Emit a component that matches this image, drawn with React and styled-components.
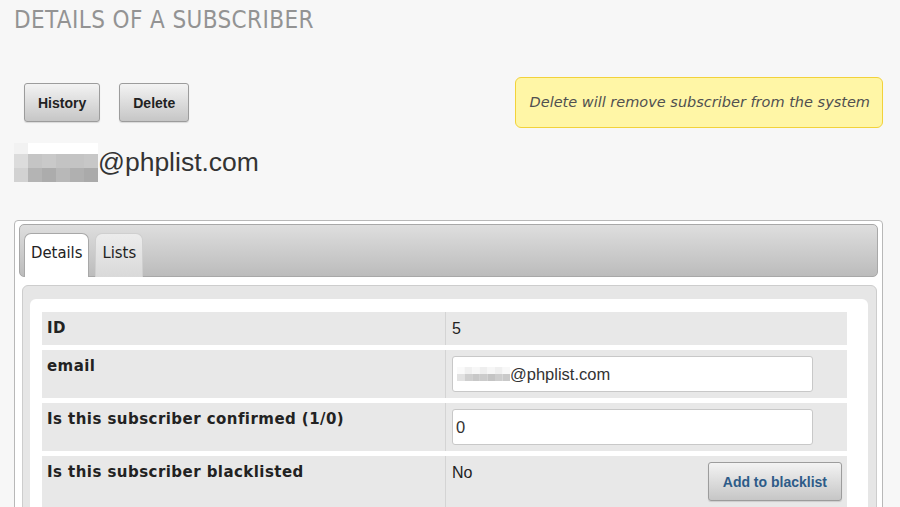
import React from 'react';
import styled, { createGlobalStyle } from 'styled-components';

const GlobalStyle = createGlobalStyle`
  html, body {
    margin: 0;
    padding: 0;
    background: #f7f7f7;
    overflow: hidden;
  }
  body {
    font-family: "Liberation Sans", Arial, sans-serif;
    color: #333;
  }
`;

const Page = styled.div`
  padding: 5px 17px 0 14px;
`;

const Title = styled.h1`
  margin: 0;
  font-family: "DejaVu Sans Condensed", "DejaVu Sans", sans-serif;
  font-size: 24px;
  line-height: 30px;
  font-weight: normal;
  letter-spacing: 0.4px;
  color: #939393;
`;

const ActionRow = styled.div`
  display: flex;
  justify-content: space-between;
  align-items: center;
  margin-top: 42px;
  padding-left: 10px;
`;

const ButtonGroup = styled.div`
  display: flex;
  gap: 19px;
`;

const GrayButton = styled.button`
  height: 39px;
  padding: 0 ${p => (p.$blue ? 14 : 13)}px;
  border: 1px solid #9c9c9c;
  border-radius: 3px;
  background: linear-gradient(#f3f3f3, #c6c6c6);
  box-shadow: 0 1px 1px rgba(0, 0, 0, 0.12);
  font-family: "Liberation Sans", Arial, sans-serif;
  font-weight: bold;
  font-size: 14px;
  color: ${p => (p.$blue ? '#2d5b88' : '#222')};
  cursor: pointer;
`;

const Note = styled.div`
  height: 49px;
  padding: 0 12px 0 14px;
  border: 1px solid #f2d23a;
  border-radius: 6px;
  background: #fff6a6;
  font-family: "DejaVu Sans", Verdana, sans-serif;
  font-style: italic;
  font-size: 14.5px;
  line-height: 49px;
  color: #505050;
`;

const EmailHeading = styled.div`
  display: flex;
  align-items: center;
  margin-top: 15px;
  font-size: 26.5px;
  line-height: 39px;
  color: #333;
`;

const Panel = styled.div`
  margin-top: 38px;
  padding: 3px 4px 0;
  border: 1px solid #b8b8b8;
  border-radius: 4px;
  background: #fff;
`;

const TabBar = styled.div`
  display: flex;
  align-items: flex-end;
  gap: 6px;
  height: 51px;
  padding: 0 4px;
  border: 1px solid #a8a8a8;
  border-radius: 5px;
  background: linear-gradient(#dedede, #bcbcbc);
`;

const Tab = styled.div`
  height: 34px;
  margin-bottom: -1px;
  padding: 9px 6px 0;
  border: 1px solid ${p => (p.$active ? '#a8a8a8' : '#cfcfcf')};
  border-bottom: none;
  border-radius: 7px 7px 0 0;
  background: ${p => (p.$active ? '#fff' : 'linear-gradient(#ececec, #d9d9d9)')};
  font-family: "DejaVu Sans Condensed", "DejaVu Sans", sans-serif;
  font-size: 16.5px;
  line-height: 20px;
  color: #222;
`;

const GrayBox = styled.div`
  margin: 8px 1px 0 3px;
  padding: 13px 8px 0 7px;
  border: 1px solid #cdcdcd;
  border-radius: 6px;
  background: #e6e6e6;
`;

const WhiteBox = styled.div`
  display: flex;
  flex-direction: column;
  gap: 5px;
  padding: 13px 21px 20px 12px;
  border-radius: 6px;
  background: #fff;
`;

const Row = styled.div`
  display: grid;
  grid-template-columns: 404px 1fr;
  background: #e8e8e8;
`;

const LabelCell = styled.div`
  padding: 7px 5px;
  border-right: 1px solid #d4d4d4;
  font-family: "DejaVu Sans", Verdana, sans-serif;
  font-weight: bold;
  font-size: 15px;
  line-height: 19px;
  letter-spacing: 0.45px;
  color: #222;
`;

const ValueCell = styled.div`
  display: flex;
  justify-content: space-between;
  align-items: flex-start;
  padding: 6px 5px 6px 6px;
`;

const PlainValue = styled.span`
  font-size: 16px;
  line-height: 21px;
  color: #222;
`;

const Field = styled.div`
  display: flex;
  align-items: center;
  box-sizing: border-box;
  width: 361px;
  height: 36px;
  padding: 0 4px 0 ${p => (p.$pad ? p.$pad : 3)}px;
  border: 1px solid #c8c8c8;
  border-radius: 3px;
  background: #fff;
  font-size: 16.5px;
  color: #333;
`;

const headingPixels = [
  { h: 11, c: ['#f2f2f2', '#fff', '#fff', '#fff', '#fff', '#fff'] },
  { h: 14, c: ['#dcdcdc', '#c5c5c5', '#c9c9c9', '#c3c3c3', '#c4c4c4', '#c7c7c7'] },
  { h: 14, c: ['#d2d2d2', '#b4b4b4', '#acacac', '#b8b8b8', '#b0b0b0', '#aaaaaa'] },
];

const fieldPixels = [
  { h: 7, c: ['#fafafa', '#f0f0f0', '#f7f7f7', '#eeeeee', '#f6f6f6', '#efefef', '#f8f8f8'] },
  { h: 7, c: ['#e2e2e2', '#cfcfcf', '#c8c8c8', '#cbcbcb', '#c4c4c4', '#cdcdcd', '#c9c9c9'] },
];

const Pixelated = ({ rows, cell, width }) => {
  const height = rows.reduce((s, r) => s + r.h, 0);
  let y = 0;
  return (
    <svg width={width} height={height} style={{ flexShrink: 0 }}>
      {rows.map((r, ri) => {
        const top = y;
        y += r.h;
        return r.c.map((c, ci) => (
          <rect key={ri + '-' + ci} x={ci * cell} y={top} width={cell} height={r.h} fill={c} />
        ));
      })}
    </svg>
  );
};

const App = () => {
  return (
    <>
      <GlobalStyle />
      <Page>
        <Title>DETAILS OF A SUBSCRIBER</Title>

        <ActionRow>
          <ButtonGroup>
            <GrayButton>History</GrayButton>
            <GrayButton>Delete</GrayButton>
          </ButtonGroup>
          <Note>Delete will remove subscriber from the system</Note>
        </ActionRow>

        <EmailHeading>
          <Pixelated rows={headingPixels} cell={14} width={84} />
          <span>@phplist.com</span>
        </EmailHeading>

        <Panel>
          <TabBar>
            <Tab $active>Details</Tab>
            <Tab>Lists</Tab>
          </TabBar>

          <GrayBox>
            <WhiteBox>
              <Row>
                <LabelCell>ID</LabelCell>
                <ValueCell>
                  <PlainValue>5</PlainValue>
                </ValueCell>
              </Row>
              <Row>
                <LabelCell>email</LabelCell>
                <ValueCell>
                  <Field $pad={4}>
                    <Pixelated rows={fieldPixels} cell={7.6} width={53} />
                    <span>@phplist.com</span>
                  </Field>
                </ValueCell>
              </Row>
              <Row>
                <LabelCell>Is this subscriber confirmed (1/0)</LabelCell>
                <ValueCell>
                  <Field>0</Field>
                </ValueCell>
              </Row>
              <Row>
                <LabelCell>Is this subscriber blacklisted</LabelCell>
                <ValueCell>
                  <PlainValue>No</PlainValue>
                  <GrayButton $blue>Add to blacklist</GrayButton>
                </ValueCell>
              </Row>
            </WhiteBox>
          </GrayBox>
        </Panel>
      </Page>
    </>
  );
};

export default App;
